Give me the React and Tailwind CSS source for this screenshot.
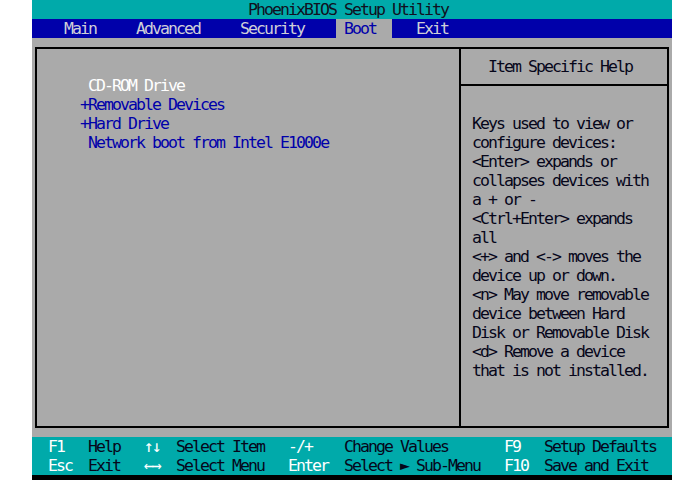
import React from "react";

const helpLines = [
  "Keys used to view or",
  "configure devices:",
  "<Enter> expands or",
  "collapses devices with",
  "a + or -",
  "<Ctrl+Enter> expands",
  "all",
  "<+> and <-> moves the",
  "device up or down.",
  "<n> May move removable",
  "device between Hard",
  "Disk or Removable Disk",
  "<d> Remove a device",
  "that is not installed.",
];

const bootItems = [
  { mark: " ", label: "CD-ROM Drive", active: true },
  { mark: "+", label: "Removable Devices" },
  { mark: "+", label: "Hard Drive" },
  { mark: " ", label: "Network boot from Intel E1000e" },
];

// footer: [key, description] pairs laid out on the 8px text grid
const FooterRow = ({ cells }) => (
  <div className="flex h-[19px] pl-[16px]">
    {cells.map((c, i) => (
      <span key={i} className={`whitespace-pre ${c.w} ${c.key ? "text-white" : "text-[#06061a]"}`}>
        {c.t}
      </span>
    ))}
  </div>
);

export default function App() {
  return (
    <div className="w-[700px] h-[480px] bg-white overflow-hidden">
      <div
        className="ml-[32px] w-[640px] text-[16.5px] leading-[19px] font-normal tracking-[-1.93px]"
        style={{ fontFamily: '"DejaVu Sans Mono", "Liberation Mono", monospace' }}
      >
        {/* title */}
        <div className="h-[19px] bg-[#00aaaa] pl-[216px] text-[#101020]">PhoenixBIOS Setup Utility</div>

        {/* menu bar */}
        <div className="flex h-[19px] bg-[#0000aa] pl-[32px] text-[#cfcfd8]">
          <span className="w-[72px]">Main</span>
          <span className="w-[104px]">Advanced</span>
          <span className="w-[96px]">Security</span>
          <span className="w-[56px] bg-[#aaaaaa] pl-[8px] text-[#0000aa]">Boot</span>
          <span className="ml-[24px]">Exit</span>
        </div>

        {/* main body */}
        <div className="h-[399px] bg-[#aaaaaa] px-[3px] pt-[9px] pb-[9px]">
          <div className="flex h-full border-2 border-black">
            <div className="w-[422px] pt-[27px] pl-[43px] text-[#0000aa]">
              {bootItems.map((it) => (
                <div key={it.label} className="h-[19px] whitespace-pre">
                  {it.mark}
                  <span className={it.active ? "text-white" : ""}>{it.label}</span>
                </div>
              ))}
            </div>
            <div className="flex-1 border-l-2 border-black">
              <div className="h-[37px] border-b-2 border-black pt-[8px] pl-[27px] text-[#06061a]">
                Item Specific Help
              </div>
              <div className="pt-[28px] pl-[11px] text-[#06061a]">
                {helpLines.map((l, i) => (
                  <div key={i} className="h-[19px] whitespace-pre">{l}</div>
                ))}
              </div>
            </div>
          </div>
        </div>

        {/* footer */}
        <div className="h-[38px] bg-[#00aaaa]">
          <FooterRow
            cells={[
              { t: "F1", w: "w-[40px]", key: true },
              { t: "Help", w: "w-[56px]" },
              { t: "↑↓", w: "w-[32px]", key: true },
              { t: "Select Item", w: "w-[112px]" },
              { t: "-/+", w: "w-[56px]", key: true },
              { t: "Change Values", w: "w-[160px]" },
              { t: "F9", w: "w-[40px]", key: true },
              { t: "Setup Defaults", w: "w-[120px]" },
            ]}
          />
          <FooterRow
            cells={[
              { t: "Esc", w: "w-[40px]", key: true },
              { t: "Exit", w: "w-[56px]" },
              { t: "←→", w: "w-[32px]", key: true },
              { t: "Select Menu", w: "w-[112px]" },
              { t: "Enter", w: "w-[56px]", key: true },
              { t: "Select ► Sub-Menu", w: "w-[160px]" },
              { t: "F10", w: "w-[40px]", key: true },
              { t: "Save and Exit", w: "w-[120px]" },
            ]}
          />
        </div>
        <div className="h-[5px] bg-black" />
      </div>
    </div>
  );
}
